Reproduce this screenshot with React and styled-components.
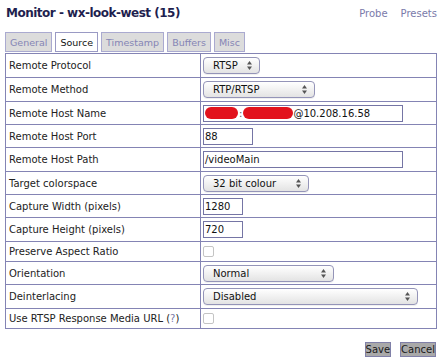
import React from "react";
import styled, { createGlobalStyle } from "styled-components";

const Global = createGlobalStyle`
  html, body { margin: 0; padding: 0; background: #fff; }
  body {
    font-family: "DejaVu Sans", Verdana, sans-serif;
    font-size: 10px;
    color: #222;
  }
`;

const LINE = "#8484b4";

const Page = styled.div`
  width: 432px;
  padding: 0 5px;
`;

const Header = styled.header`
  display: flex;
  align-items: center;
  justify-content: space-between;
  height: 26px;
  padding-left: 1px;
`;

const Title = styled.h1`
  margin: 0;
  font-size: 12px;
  font-weight: bold;
  letter-spacing: -0.5px;
  color: #1f1f4f;
`;

const HeadLinks = styled.nav`
  display: flex;
  gap: 13px;
`;

const HeadLink = styled.a`
  color: #7a7aaa;
  font-size: 10px;
  text-decoration: none;
`;

const Tabs = styled.div`
  display: flex;
  gap: 3px;
  margin-top: 6px;
  height: 20px;
`;

const Tab = styled.div`
  display: flex;
  align-items: center;
  box-sizing: border-box;
  height: 20px;
  padding: 0 4px;
  font-size: 9.5px;
  border: 1px solid ${(p) => (p.$active ? "#9a9ac4" : "#aaaad0")};
  background: ${(p) => (p.$active ? "#fff" : "#dcdcdc")};
  color: ${(p) => (p.$active ? "#111" : "#8585b5")};
`;

const Form = styled.div`
  margin-top: 1px;
  border: 1px solid ${LINE};
`;

const Row = styled.div`
  display: grid;
  grid-template-columns: 195px 1fr;
  box-sizing: border-box;
  height: ${(p) => p.$h}px;
  border-bottom: 1px solid ${LINE};
  &:last-child {
    border-bottom: none;
  }
`;

const Label = styled.div`
  display: flex;
  align-items: center;
  padding-left: 3px;
  border-right: 1px solid ${LINE};
  color: #222;
`;

const Help = styled.a`
  color: #7a7aaa;
  text-decoration: none;
`;

const Value = styled.div`
  display: flex;
  align-items: center;
  padding-left: 2px;
`;

const SelectBox = styled.div`
  display: inline-flex;
  align-items: center;
  justify-content: space-between;
  box-sizing: border-box;
  width: ${(p) => p.$w}px;
  height: 17px;
  padding: 0 7px 0 9px;
  border: 1px solid #9494b8;
  border-radius: 4px;
  background: linear-gradient(#ffffff, #f1f1f1 50%, #e3e3e3);
  box-shadow: 0 1px 0 rgba(0, 0, 0, 0.06);
  color: #111;
`;

const Field = styled.div`
  display: flex;
  align-items: center;
  box-sizing: border-box;
  width: ${(p) => p.$w}px;
  height: 17px;
  padding: 0 1px;
  border: 1px solid #7575a5;
  background: #fff;
  color: #111;
  white-space: nowrap;
`;

const Redact = styled.span`
  display: inline-block;
  width: ${(p) => p.$w}px;
  height: 12px;
  border-radius: 6px;
  background: #e2121c;
`;

const Colon = styled.span`
  margin: 0 1px;
  color: #555;
`;

const Check = styled.span`
  display: inline-block;
  box-sizing: border-box;
  width: 11px;
  height: 11px;
  border: 1px solid #c4c4c4;
  border-radius: 2px;
  background: #fff;
`;

const Actions = styled.div`
  display: flex;
  justify-content: flex-end;
  gap: 9px;
  margin-top: 13px;
  padding-right: 1px;
`;

const Button = styled.button`
  font-family: inherit;
  font-size: 10px;
  height: 15px;
  line-height: 13px;
  padding: 0;
  border: 1px solid #8080a8;
  border-radius: 0;
  background: #a9a9a9;
  color: #1a1a1a;
`;

const Arrows = () => (
  <svg width="5" height="9" viewBox="0 0 5 9">
    <path d="M0 3.6 L2.5 0 L5 3.6Z" fill="#555" />
    <path d="M0 5.4 L2.5 9 L5 5.4Z" fill="#555" />
  </svg>
);

const Select = ({ w, children }) => (
  <SelectBox $w={w}>
    <span>{children}</span>
    <Arrows />
  </SelectBox>
);

const tabs = ["General", "Source", "Timestamp", "Buffers", "Misc"];

export default function App() {
  return (
    <Page>
      <Global />
      <Header>
        <Title>Monitor - wx-look-west (15)</Title>
        <HeadLinks>
          <HeadLink href="#">Probe</HeadLink>
          <HeadLink href="#">Presets</HeadLink>
        </HeadLinks>
      </Header>
      <Tabs>
        {tabs.map((t) => (
          <Tab key={t} $active={t === "Source"}>
            {t}
          </Tab>
        ))}
      </Tabs>
      <Form>
        <Row $h={24}>
          <Label>Remote Protocol</Label>
          <Value><Select w={57}>RTSP</Select></Value>
        </Row>
        <Row $h={24}>
          <Label>Remote Method</Label>
          <Value><Select w={112}>RTP/RTSP</Select></Value>
        </Row>
        <Row $h={23}>
          <Label>Remote Host Name</Label>
          <Value>
            <Field $w={200}>
              <Redact $w={33} />
              <Colon>:</Colon>
              <Redact $w={50} />
              <span>@10.208.16.58</span>
            </Field>
          </Value>
        </Row>
        <Row $h={23}>
          <Label>Remote Host Port</Label>
          <Value><Field $w={50}>88</Field></Value>
        </Row>
        <Row $h={24}>
          <Label>Remote Host Path</Label>
          <Value><Field $w={200}>/videoMain</Field></Value>
        </Row>
        <Row $h={23}>
          <Label>Target colorspace</Label>
          <Value><Select w={106}>32 bit colour</Select></Value>
        </Row>
        <Row $h={23}>
          <Label>Capture Width (pixels)</Label>
          <Value><Field $w={40}>1280</Field></Value>
        </Row>
        <Row $h={24}>
          <Label>Capture Height (pixels)</Label>
          <Value><Field $w={40}>720</Field></Value>
        </Row>
        <Row $h={20}>
          <Label>Preserve Aspect Ratio</Label>
          <Value><Check /></Value>
        </Row>
        <Row $h={23}>
          <Label>Orientation</Label>
          <Value><Select w={131}>Normal</Select></Value>
        </Row>
        <Row $h={24}>
          <Label>Deinterlacing</Label>
          <Value><Select w={215}>Disabled</Select></Value>
        </Row>
        <Row $h={19}>
          <Label>
            Use RTSP Response Media URL (<Help href="#">?</Help>)
          </Label>
          <Value><Check /></Value>
        </Row>
      </Form>
      <Actions>
        <Button>Save</Button>
        <Button>Cancel</Button>
      </Actions>
    </Page>
  );
}
